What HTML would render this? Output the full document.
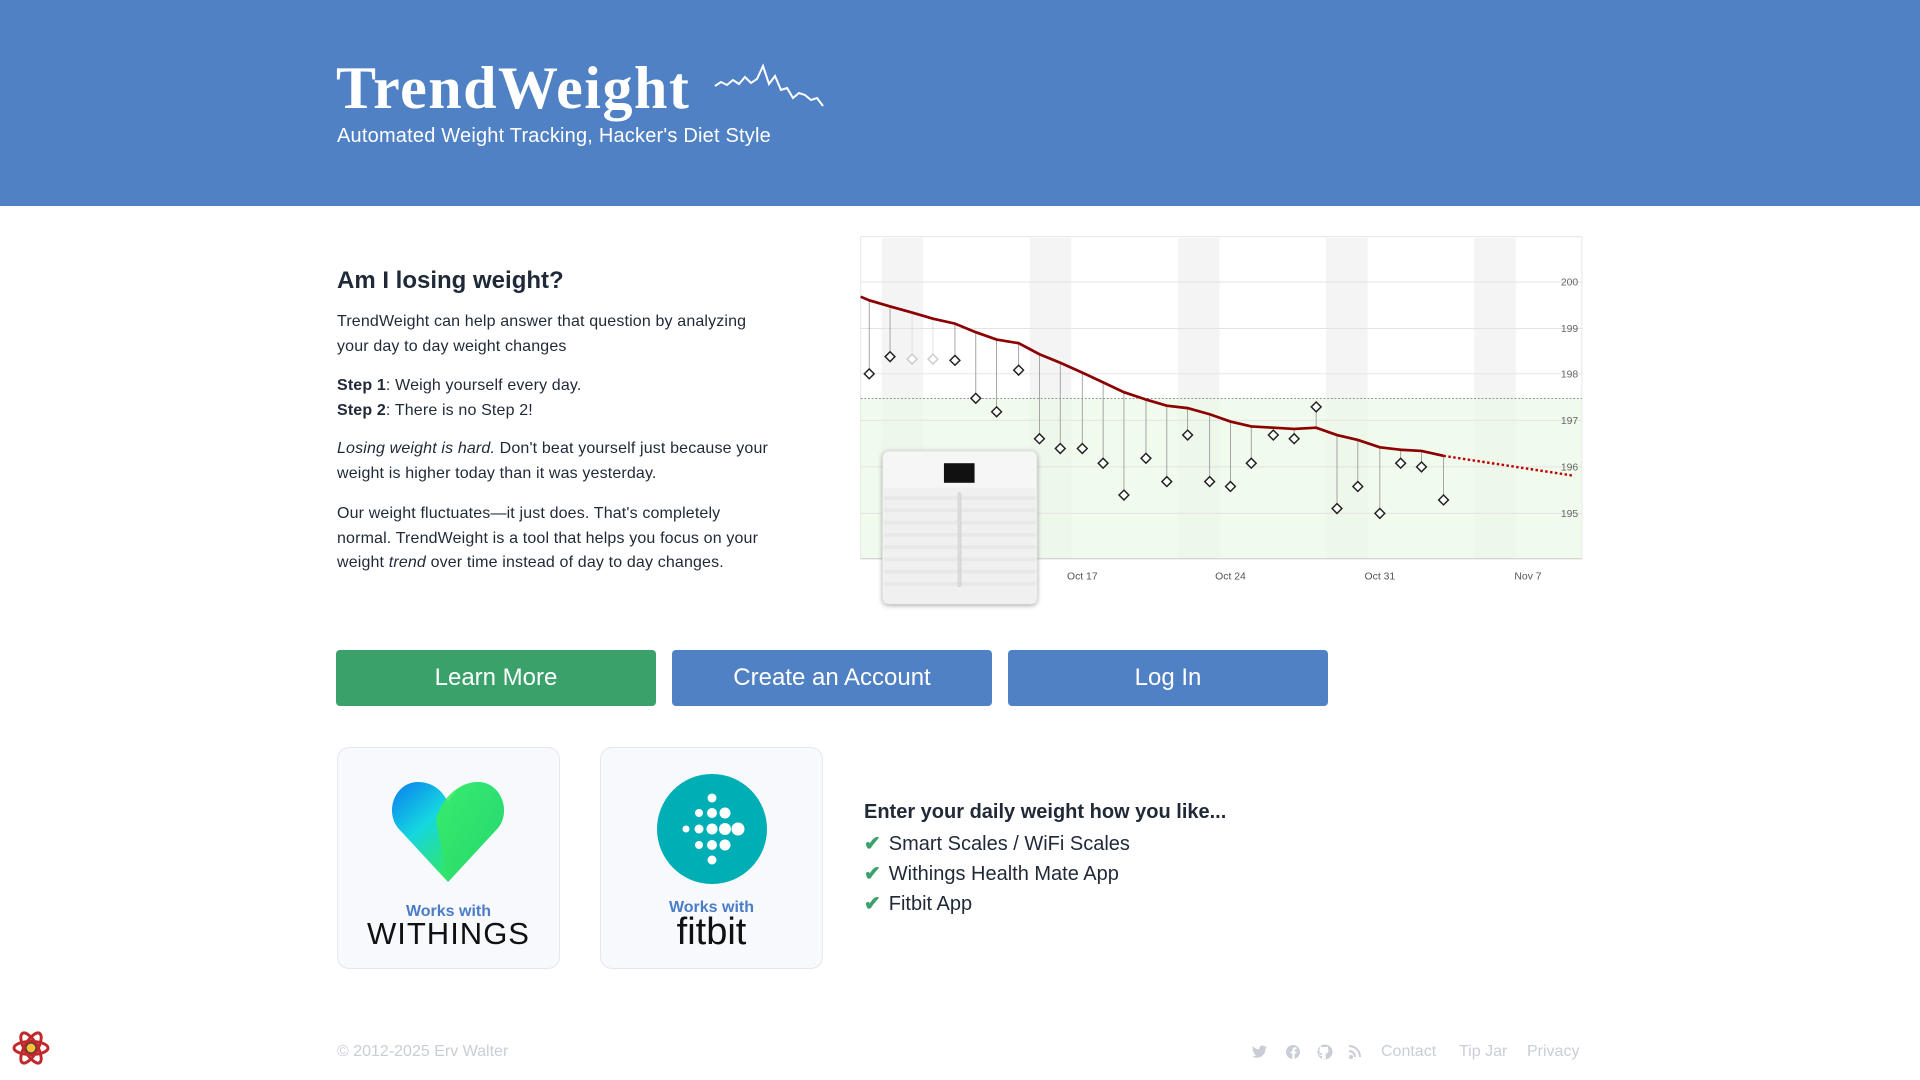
<!DOCTYPE html>
<html><head><meta charset="utf-8"><style>
*{margin:0;padding:0;box-sizing:border-box}
body{width:1920px;height:1080px;overflow:hidden;background:#fff;font-family:"Liberation Sans",sans-serif;color:#1f2937;position:relative}
.hdr{position:absolute;left:0;top:0;width:1920px;height:206px;background:#5081c4}
.title{position:absolute;left:336px;top:54px;font-family:"Liberation Serif",serif;font-weight:bold;font-size:60px;color:#fff;letter-spacing:1.5px}
.sub{position:absolute;left:337px;top:125px;font-size:20px;color:#fff;letter-spacing:0.2px}
.t{position:absolute;left:337px;font-size:16px;line-height:24.5px;color:#1f2937;letter-spacing:0.15px}
h2{position:absolute;left:337px;top:267px;font-size:24px;font-weight:bold;color:#1f2937}
.btn{position:absolute;top:650px;height:56px;width:320px;border-radius:4px;color:#fff;font-size:24px;text-align:center;line-height:56px}
.card{position:absolute;top:747px;width:223px;height:222px;border:1px solid #e2e8f0;border-radius:12px;background:#f7f9fc}
.works{position:absolute;width:100%;text-align:center;color:#4a7cc7;font-weight:bold;font-size:16px}
.list{position:absolute;left:864px;font-size:20px;color:#1f2937}
.ck{color:#3aa16a;font-weight:bold;margin-right:8px}
.ft{position:absolute;top:1043px;font-size:16px;color:#c9ced6}
</style></head><body>
<div class="hdr">
<div class="title">TrendWeight</div>
<svg style="position:absolute;left:713px;top:62px" width="112" height="48" viewBox="0 0 112 48"><polyline points="2,24 8,20 14,23 20,18 26,22 32,15 38,21 44,17 50,4 56,22 62,14 68,28 74,26 80,36 86,31 92,33 98,38 104,36 110,44" fill="none" stroke="#fff" stroke-width="2"/></svg>
<div class="sub">Automated Weight Tracking, Hacker's Diet Style</div>
</div>
<h2>Am I losing weight?</h2>
<div class="t" style="top:310px">TrendWeight can help answer that question by analyzing<br>your day to day weight changes</div>
<div class="t" style="top:374px"><b>Step 1</b>: Weigh yourself every day.<br><b>Step 2</b>: There is no Step 2!</div>
<div class="t" style="top:437px"><i>Losing weight is hard.</i> Don't beat yourself just because your<br>weight is higher today than it was yesterday.</div>
<div class="t" style="top:502px">Our weight fluctuates—it just does. That's completely<br>normal. TrendWeight is a tool that helps you focus on your<br>weight <i>trend</i> over time instead of day to day changes.</div>

<svg style="position:absolute;left:857.1px;top:232.7px" width="734.7" height="379.6" viewBox="700 190 600 310">
<rect x="703" y="193" width="589" height="263" fill="#fff" stroke="#e5e5e5" stroke-width="0.8"/>
<g fill="#f4f4f4"><rect x="720" y="194" width="34" height="262"/><rect x="841" y="194" width="34" height="262"/><rect x="962" y="194" width="34" height="262"/><rect x="1083" y="194" width="34" height="262"/><rect x="1204" y="194" width="34" height="262"/></g>
<rect x="703" y="325" width="589" height="131" fill="#e9f8e6" opacity="0.7"/>
<g stroke="#e3e3e3" stroke-width="0.8"><line x1="703" x2="1292" y1="230" y2="230"/><line x1="703" x2="1292" y1="268" y2="268"/><line x1="703" x2="1292" y1="305" y2="305"/><line x1="703" x2="1292" y1="343" y2="343"/><line x1="703" x2="1292" y1="381" y2="381"/><line x1="703" x2="1292" y1="419" y2="419"/></g>
<line x1="703" x2="1292" y1="325" y2="325" stroke="#556" stroke-width="0.6" stroke-dasharray="1.5,1.5"/>
<line x1="703" x2="1292" y1="456" y2="456" stroke="#ccc" stroke-width="0.8"/>
<g font-family="Liberation Sans" font-size="8.5" fill="#666" text-anchor="end"><text x="1289" y="233">200</text><text x="1289" y="271">199</text><text x="1289" y="308">198</text><text x="1289" y="346">197</text><text x="1289" y="384">196</text><text x="1289" y="422">195</text></g>
<g font-family="Liberation Sans" font-size="8.5" fill="#555" text-anchor="middle"><text x="884" y="473">Oct 17</text><text x="1005" y="473">Oct 24</text><text x="1127" y="473">Oct 31</text><text x="1248" y="473">Nov 7</text></g>
<g stroke="#999" stroke-width="0.7">
<line x1="710" y1="245" x2="710" y2="305"/><line x1="727" y1="250" x2="727" y2="291"/><line x1="745" y1="255" x2="745" y2="293" stroke="#ddd"/><line x1="762" y1="260" x2="762" y2="293" stroke="#ddd"/><line x1="780" y1="264" x2="780" y2="294"/><line x1="797" y1="271" x2="797" y2="325"/><line x1="814" y1="277" x2="814" y2="336"/><line x1="832" y1="280" x2="832" y2="302"/><line x1="849" y1="289" x2="849" y2="358"/><line x1="866" y1="296" x2="866" y2="366"/><line x1="884" y1="304" x2="884" y2="366"/><line x1="901" y1="312" x2="901" y2="378"/><line x1="918" y1="320" x2="918" y2="404"/><line x1="936" y1="326" x2="936" y2="374"/><line x1="953" y1="331" x2="953" y2="393"/><line x1="970" y1="333" x2="970" y2="355"/><line x1="988" y1="338" x2="988" y2="393"/><line x1="1005" y1="344" x2="1005" y2="397"/><line x1="1022" y1="348" x2="1022" y2="378"/><line x1="1040" y1="349" x2="1040" y2="355"/><line x1="1057" y1="350" x2="1057" y2="358"/><line x1="1075" y1="349" x2="1075" y2="332"/><line x1="1092" y1="355" x2="1092" y2="415"/><line x1="1109" y1="359" x2="1109" y2="397"/><line x1="1127" y1="365" x2="1127" y2="419"/><line x1="1144" y1="367" x2="1144" y2="378"/><line x1="1161" y1="368" x2="1161" y2="381"/><line x1="1179" y1="372" x2="1179" y2="408"/>
</g>
<polyline fill="none" stroke="#8b0000" stroke-width="2.2" points="703,242 710,245 727,250 745,255 762,260 780,264 797,271 814,277 832,280 849,289 866,296 884,304 901,312 918,320 936,326 953,331 970,333 988,338 1005,344 1022,348 1040,349 1057,350 1075,349 1092,355 1109,359 1127,365 1144,367 1161,368 1179,372"/>
<line x1="1179" y1="372" x2="1284" y2="388" stroke="#b00" stroke-width="2" stroke-dasharray="2,2"/>
<g fill="#fff" stroke="#222" stroke-width="1.2">
<path d="M710 301l4 4-4 4-4-4z"/><path d="M727 287l4 4-4 4-4-4z"/><path d="M745 289l4 4-4 4-4-4z" stroke="#ccc"/><path d="M762 289l4 4-4 4-4-4z" stroke="#ccc"/><path d="M780 290l4 4-4 4-4-4z"/><path d="M797 321l4 4-4 4-4-4z"/><path d="M814 332l4 4-4 4-4-4z"/><path d="M832 298l4 4-4 4-4-4z"/><path d="M849 354l4 4-4 4-4-4z"/><path d="M866 362l4 4-4 4-4-4z"/><path d="M884 362l4 4-4 4-4-4z"/><path d="M901 374l4 4-4 4-4-4z"/><path d="M918 400l4 4-4 4-4-4z"/><path d="M936 370l4 4-4 4-4-4z"/><path d="M953 389l4 4-4 4-4-4z"/><path d="M970 351l4 4-4 4-4-4z"/><path d="M988 389l4 4-4 4-4-4z"/><path d="M1005 393l4 4-4 4-4-4z"/><path d="M1022 374l4 4-4 4-4-4z"/><path d="M1040 351l4 4-4 4-4-4z"/><path d="M1057 354l4 4-4 4-4-4z"/><path d="M1075 328l4 4-4 4-4-4z"/><path d="M1092 411l4 4-4 4-4-4z"/><path d="M1109 393l4 4-4 4-4-4z"/><path d="M1127 415l4 4-4 4-4-4z"/><path d="M1144 374l4 4-4 4-4-4z"/><path d="M1161 377l4 4-4 4-4-4z"/><path d="M1179 404l4 4-4 4-4-4z"/>
</g>
<defs><filter id="sh" x="-20%" y="-20%" width="140%" height="140%"><feDropShadow dx="0" dy="1" stdDeviation="2" flood-opacity="0.35"/></filter></defs>
<rect x="721" y="368" width="126" height="125" rx="5" fill="#f6f6f6" stroke="#ddd" stroke-width="0.6" filter="url(#sh)"/>
<rect x="722" y="398" width="124" height="94" fill="#f0f0f0"/>
<g fill="#e8e8e8"><rect x="722" y="405" width="124" height="3"/><rect x="722" y="415" width="124" height="3"/><rect x="722" y="425" width="124" height="3"/><rect x="722" y="435" width="124" height="3"/><rect x="722" y="445" width="124" height="3"/><rect x="722" y="455" width="124" height="3"/><rect x="722" y="465" width="124" height="3"/><rect x="722" y="475" width="124" height="3"/></g>
<rect x="771" y="378" width="25" height="16" fill="#111"/>
<rect x="782.5" y="402" width="2.5" height="77" rx="1.2" fill="#ddd" stroke="#bbb" stroke-width="0.3"/>
</svg>

<div class="btn" style="left:336px;background:#3aa16a">Learn More</div>
<div class="btn" style="left:672px;background:#5081c4">Create an Account</div>
<div class="btn" style="left:1008px;background:#5081c4">Log In</div>

<div class="card" style="left:337px">
<svg style="position:absolute;left:52px;top:32px" width="116" height="104" viewBox="0 0 116 104">
<defs><linearGradient id="hg" x1="0" y1="0" x2="1" y2="1"><stop offset="0" stop-color="#0a7cf0"/><stop offset="0.35" stop-color="#15d6e0"/><stop offset="0.7" stop-color="#30e66a"/><stop offset="1" stop-color="#4cf04a"/></linearGradient>
<linearGradient id="hg2" x1="0" y1="0" x2="1" y2="1"><stop offset="0" stop-color="#40f250"/><stop offset="1" stop-color="#20d080"/></linearGradient></defs>
<path d="M58 102 L8 48 C-6 30 6 2 28 2 C42 2 52 10 58 22 C64 10 74 2 88 2 C110 2 122 30 108 48 Z" fill="url(#hg)"/>
<path d="M58 102 L46 40 C52 16 70 2 88 2 C110 2 122 30 108 48 Z" fill="url(#hg2)" opacity="0.85"/>
</svg>
<div class="works" style="top:155px">Works with</div>
<div style="position:absolute;top:168px;width:100%;text-align:center;font-size:31px;color:#111;letter-spacing:1px">WITHINGS</div>
</div>
<div class="card" style="left:600px">
<svg style="position:absolute;left:54px;top:24px" width="114" height="114" viewBox="0 0 114 114">
<circle cx="57" cy="57" r="55" fill="#00afb5"/>
<g fill="#fff">
<circle cx="57" cy="26" r="4.5"/>
<circle cx="44" cy="41" r="4"/><circle cx="57" cy="41" r="5"/><circle cx="70" cy="41" r="5.5"/>
<circle cx="31" cy="57" r="3.5"/><circle cx="44" cy="57" r="4.5"/><circle cx="57" cy="57" r="5.5"/><circle cx="70" cy="57" r="6"/><circle cx="83" cy="57" r="6.5"/>
<circle cx="44" cy="73" r="4"/><circle cx="57" cy="73" r="5"/><circle cx="70" cy="73" r="5.5"/>
<circle cx="57" cy="88" r="4.5"/>
</g></svg>
<div class="works" style="top:151px">Works with</div>
<div style="position:absolute;top:163px;width:100%;text-align:center;font-size:38px;color:#111">fitbit</div>
</div>

<div class="list" style="top:801px;font-weight:bold">Enter your daily weight how you like...</div>
<div class="list" style="top:831px"><span class="ck">✔</span>Smart Scales / WiFi Scales</div>
<div class="list" style="top:861px"><span class="ck">✔</span>Withings Health Mate App</div>
<div class="list" style="top:891px"><span class="ck">✔</span>Fitbit App</div>

<svg style="position:absolute;left:11px;top:1028px" width="40" height="40" viewBox="-20 -20 40 40">
<g fill="none" stroke="#c0282b" stroke-width="3"><ellipse rx="17" ry="6.5"/><ellipse rx="17" ry="6.5" transform="rotate(60)"/><ellipse rx="17" ry="6.5" transform="rotate(120)"/></g>
<circle r="5" fill="#f3c13a" stroke="#333" stroke-width="1"/></svg>

<div class="ft" style="left:337px">© 2012-2025 Erv Walter</div>
<svg style="position:absolute;left:1252px;top:1044px" width="112" height="16" viewBox="0 0 112 16" fill="#c9ced6">
<path d="M15 3c-.6.3-1.2.4-1.8.5.7-.4 1.1-1 1.4-1.7-.6.4-1.3.6-2 .8A3.1 3.1 0 0 0 7.3 5.4 8.8 8.8 0 0 1 .9 2.1a3.1 3.1 0 0 0 1 4.1c-.5 0-1-.2-1.4-.4 0 1.5 1.1 2.7 2.5 3-.5.1-.9.2-1.4.1.4 1.2 1.5 2.1 2.9 2.1A6.2 6.2 0 0 1 0 12.3 8.8 8.8 0 0 0 13.5 4.9V4.5c.6-.4 1.1-1 1.5-1.5z"/>
<circle cx="41" cy="8" r="7"/><path d="M42.5 15V9.5h1.8l.3-2h-2.1V6.3c0-.6.2-1 1-1h1.1V3.5c-.2 0-.9-.1-1.6-.1-1.6 0-2.6 1-2.6 2.7v1.4h-1.8v2h1.8V15z" fill="#fff"/>
<circle cx="73" cy="8" r="7.5"/><path d="M70 15v-3c-2 .4-2.5-1-2.5-1-.4-1-.9-1.1-.9-1.1-.7-.5.1-.5.1-.5.7 0 1.1.8 1.1.8.7 1.1 1.7.8 2.2.6 0-.5.3-.8.5-1-1.6-.2-3.2-.8-3.2-3.5 0-.8.3-1.4.7-1.9 0-.2-.3-.9.1-1.9 0 0 .6-.2 2 .7a7 7 0 0 1 3.6 0c1.4-.9 2-.7 2-.7.4 1 .2 1.7.1 1.9.5.5.7 1.1.7 1.9 0 2.7-1.6 3.3-3.2 3.5.3.2.5.7.5 1.3V15z" fill="#fff"/>
<circle cx="99" cy="13" r="2"/><path d="M97 6a7 7 0 0 1 7 7h-2a5 5 0 0 0-5-5zM97 1a12 12 0 0 1 12 12h-2A10 10 0 0 0 97 3z"/>
</svg>
<div class="ft" style="left:1381px">Contact</div>
<div class="ft" style="left:1459px">Tip Jar</div>
<div class="ft" style="left:1527px">Privacy</div>
</body></html>
